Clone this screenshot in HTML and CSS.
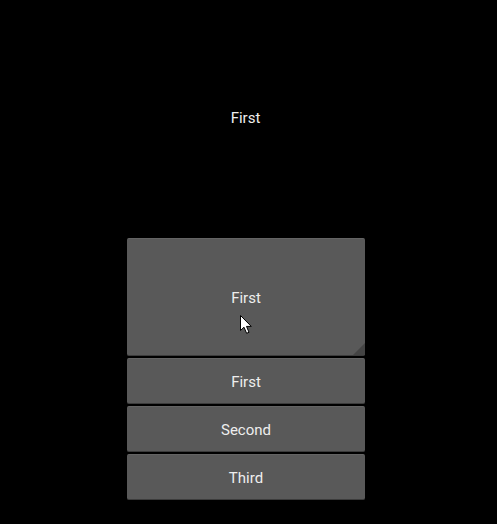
FILE: index.html
```html
<!DOCTYPE html>
<html>
<head>
<meta charset="utf-8">
<link rel="stylesheet" href="styles.css">
</head>
<body>
<div class="app">
  <div class="label">First</div>
  <div class="spinner">
    <div class="btn main">First<span class="corner"></span></div>
    <div class="btn item">First</div>
    <div class="btn item">Second</div>
    <div class="btn item">Third</div>
  </div>
</div>
<svg class="cursor" width="14" height="20" viewBox="0 0 14 20">
  <path d="M0.5 0.5 L0.5 15.5 L4 12.2 L6.6 18.3 L9 17.3 L6.5 11.4 L11.3 11.4 Z" fill="#fff" stroke="#000" stroke-width="1"/>
</svg>
</body>
</html>
```
FILE: styles.css
```css
html, body {
  margin: 0;
  padding: 0;
  background: #000;
  width: 497px;
  height: 524px;
  overflow: hidden;
}
.app {
  display: flex;
  flex-direction: column;
  font-family: Roboto, "Liberation Sans", sans-serif;
  font-size: 15px;
  color: #eeeeee;
}
.label {
  height: 236px;
  display: flex;
  align-items: center;
  justify-content: center;
  margin-left: -6px;
}
.spinner {
  margin-left: 127px;
  margin-top: 2px;
  width: 238px;
  display: flex;
  flex-direction: column;
  gap: 2px;
}
.btn {
  position: relative;
  box-sizing: border-box;
  background: #595959;
  border-top: 1px solid #646464;
  border-bottom: 1px solid #3c3c3c;
  border-radius: 2px;
  display: flex;
  align-items: center;
  justify-content: center;
  padding-top: 2px;
}
.main {
  height: 118px;
}
.item {
  height: 46px;
}
.corner {
  position: absolute;
  right: 0;
  bottom: 0;
  width: 12px;
  height: 12px;
  background: #444444;
  clip-path: polygon(100% 0, 100% 100%, 0 100%);
}
.cursor {
  position: absolute;
  left: 240px;
  top: 315px;
}
```
